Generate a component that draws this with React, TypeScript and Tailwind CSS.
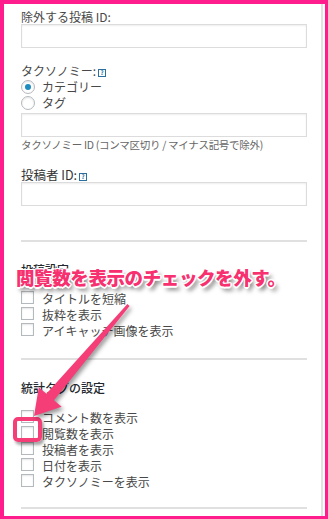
import React from 'react';

const pink = '#f7306f';

function Help() {
  return (
    <span className="ml-[2px] inline-flex h-[8px] w-[8px] items-center justify-center border border-[#2a6f9e] text-[6px] leading-none font-bold text-[#2a6f9e] align-middle">
      ?
    </span>
  );
}

function Field() {
  return (
    <div className="h-[24px] w-full border border-[#dcdcdc] bg-white shadow-[inset_0_1px_2px_rgba(0,0,0,0.07)]" />
  );
}

function Radio({ label, checked }: { label: string; checked?: boolean }) {
  return (
    <div className="flex h-[16px] items-center">
      <span className="mr-[7px] flex h-[14px] w-[14px] items-center justify-center rounded-full border border-[#b4b9be] bg-white shadow-[inset_0_1px_2px_rgba(0,0,0,0.1)]">
        {checked && <span className="h-[6px] w-[6px] rounded-full bg-[#1e8cbe]" />}
      </span>
      <span>{label}</span>
    </div>
  );
}

function Check({ label }: { label: string }) {
  return (
    <div className="flex h-[16px] items-center">
      <span className="mr-[8px] -mt-[3px] h-[13px] w-[13px] shrink-0 border border-[#b4b9be] bg-white shadow-[inset_0_1px_2px_rgba(0,0,0,0.1)]" />
      <span>{label}</span>
    </div>
  );
}

function Rule() {
  return <div className="h-[2px] w-full bg-[#e0e0e0]" />;
}

export default function App() {
  return (
    <div className="relative h-[519px] w-[328px] overflow-hidden bg-white font-['Noto_Sans_CJK_JP','Noto_Sans',sans-serif] text-[12px] text-[#484848]">
      <div className="h-full border-l-4 border-t-4 border-r-[3px] border-b-[3px] border-[#ff1c8d]">
        <div className="mr-[2px] h-full border-r-2 border-[#e2e2e2] pl-[17px] pr-[14px] pt-[5px]">
          <div className="leading-[15px]">除外する投稿 ID:</div>
          <Field />

          <div className="mt-[15px] leading-[16px]">
            タクソノミー:
            <Help />
          </div>
          <Radio label="カテゴリー" checked />
          <Radio label="タグ" />
          <div className="mt-[2px]">
            <Field />
          </div>
          <div className="mt-[1px] text-[10.5px] leading-[14px] tracking-[-0.3px] text-[#666]">
            タクソノミー ID (コンマ区切り / マイナス記号で除外)
          </div>

          <div className="mt-[15px] text-[12.5px] leading-[15px] text-[#333]">
            投稿者 ID:
            <Help />
          </div>
          <Field />

          <div className="mt-[34px]">
            <Rule />
          </div>

          <div className="mt-[20px] font-medium leading-[16px] text-[#23282d]">投稿設定</div>
          <div className="mt-[13px]">
            <Check label="タイトルを短縮" />
            <Check label="抜粋を表示" />
            <Check label="アイキャッチ画像を表示" />
          </div>

          <div className="mt-[19px]">
            <Rule />
          </div>

          <div className="mt-[20px] font-medium leading-[16px] text-[#23282d]">統計タグの設定</div>
          <div className="mt-[14px]">
            <Check label="コメント数を表示" />
            <Check label="閲覧数を表示" />
            <Check label="投稿者を表示" />
            <Check label="日付を表示" />
            <Check label="タクソノミーを表示" />
          </div>

          <div className="mt-[17px]">
            <Rule />
          </div>
        </div>
      </div>

      {/* annotation */}
      <div className="absolute left-[13px] top-[417px] h-[25px] w-[29px] rounded-[5px] border-4 border-[#f53d78] shadow-[2px_3px_3px_rgba(0,0,0,0.35)]" />

      <svg
        className="pointer-events-none absolute left-0 top-0 drop-shadow-[2px_3px_2px_rgba(0,0,0,0.4)]"
        width="328"
        height="519"
        viewBox="0 0 328 519"
      >
        <polygon
          points="127.4,304 46.4,393.8 38.8,387.3 34,416 61.6,406.8 54,400.3 129.6,306"
          fill="#f53d78"
        />
      </svg>

      <div
        className="absolute left-[16px] top-[266px] whitespace-nowrap text-[18.5px] font-black leading-[22px] tracking-[-0.4px] [text-shadow:1px_1px_0_#fff,-1px_-1px_0_#fff,1px_-1px_0_#fff,-1px_1px_0_#fff,0_1.5px_0_#fff,0_-1.5px_0_#fff,1.5px_0_0_#fff,-1.5px_0_0_#fff,3px_4px_4px_rgba(0,0,0,0.55)]"
        style={{ color: pink }}
      >
        閲覧数を表示のチェックを外す。
      </div>
    </div>
  );
}
